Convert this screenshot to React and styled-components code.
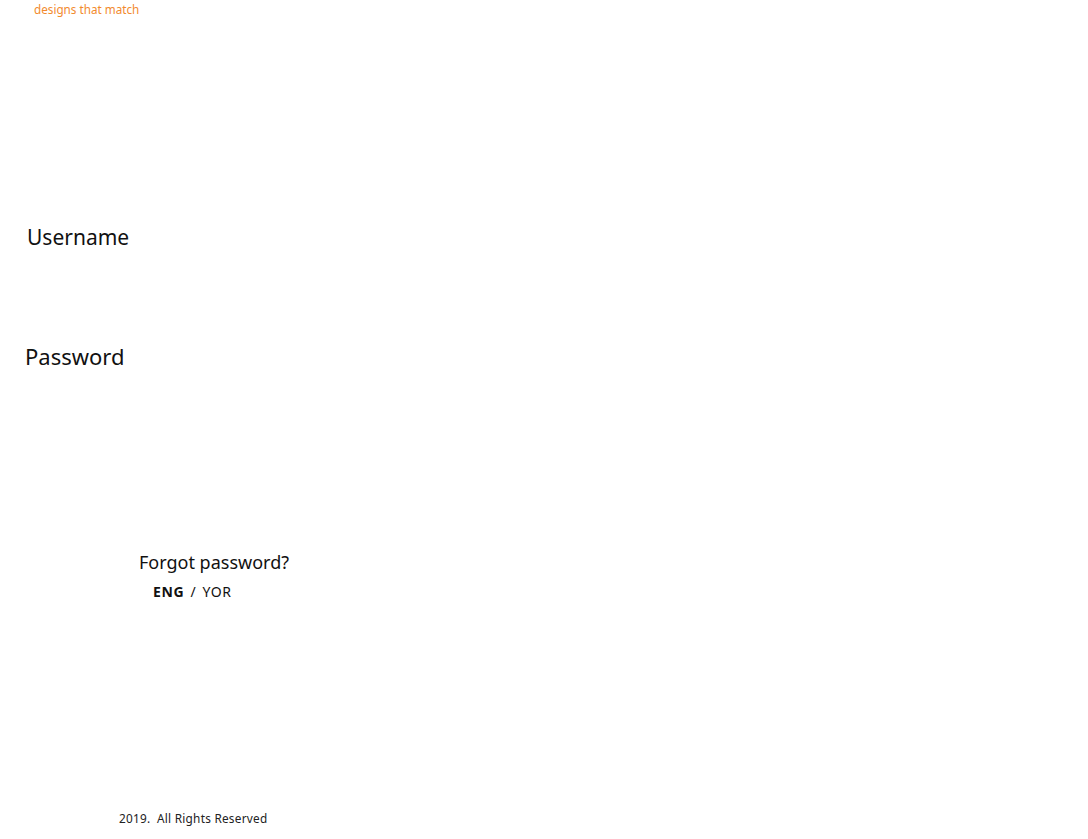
import React from 'react'
import styled, { createGlobalStyle } from 'styled-components'

const Global = createGlobalStyle`
  body {
    margin: 0;
    background: #fff;
    font-family: "Noto Sans", "Open Sans", sans-serif;
    color: #111;
  }
`

const Page = styled.div`
  display: flex;
  flex-direction: column;
  width: 1088px;
  height: 839px;
  overflow: hidden;
`

const Tagline = styled.div`
  margin: 1px 0 0 34px;
  font-size: 11.7px;
  line-height: 16px;
  color: #f28a2e;
`

const FieldLabel = styled.label`
  display: block;
  margin: ${p => p.top}px 0 0 ${p => p.left}px;
  font-size: ${p => p.size}px;
  line-height: 30px;
  color: #111;
`

const Forgot = styled.a`
  display: block;
  margin: 179px 0 0 139px;
  font-size: 18px;
  line-height: 24px;
  color: #111;
  text-decoration: none;
`

const LangRow = styled.div`
  display: flex;
  align-items: baseline;
  gap: 6px;
  margin: 9px 0 0 153px;
  font-size: 14px;
  line-height: 18px;
  letter-spacing: 0.7px;
`

const Lang = styled.span`
  font-weight: ${p => (p.active ? 700 : 400)};
  color: #111;
`

const Footer = styled.div`
  margin: auto 0 14px 119px;
  font-size: 11.8px;
  line-height: 14px;
  letter-spacing: 0.25px;
  color: #222;
`

export default function App() {
  return (
    <>
      <Global />
      <Page>
        <Tagline>designs that match</Tagline>
        <FieldLabel top={205} left={27} size={21}>Username</FieldLabel>
        <FieldLabel top={89} left={25} size={22}>Password</FieldLabel>
        <Forgot href="#">Forgot password?</Forgot>
        <LangRow>
          <Lang active>ENG</Lang>
          <Lang>/</Lang>
          <Lang>YOR</Lang>
        </LangRow>
        <Footer>2019.&nbsp; All Rights Reserved</Footer>
      </Page>
    </>
  )
}
